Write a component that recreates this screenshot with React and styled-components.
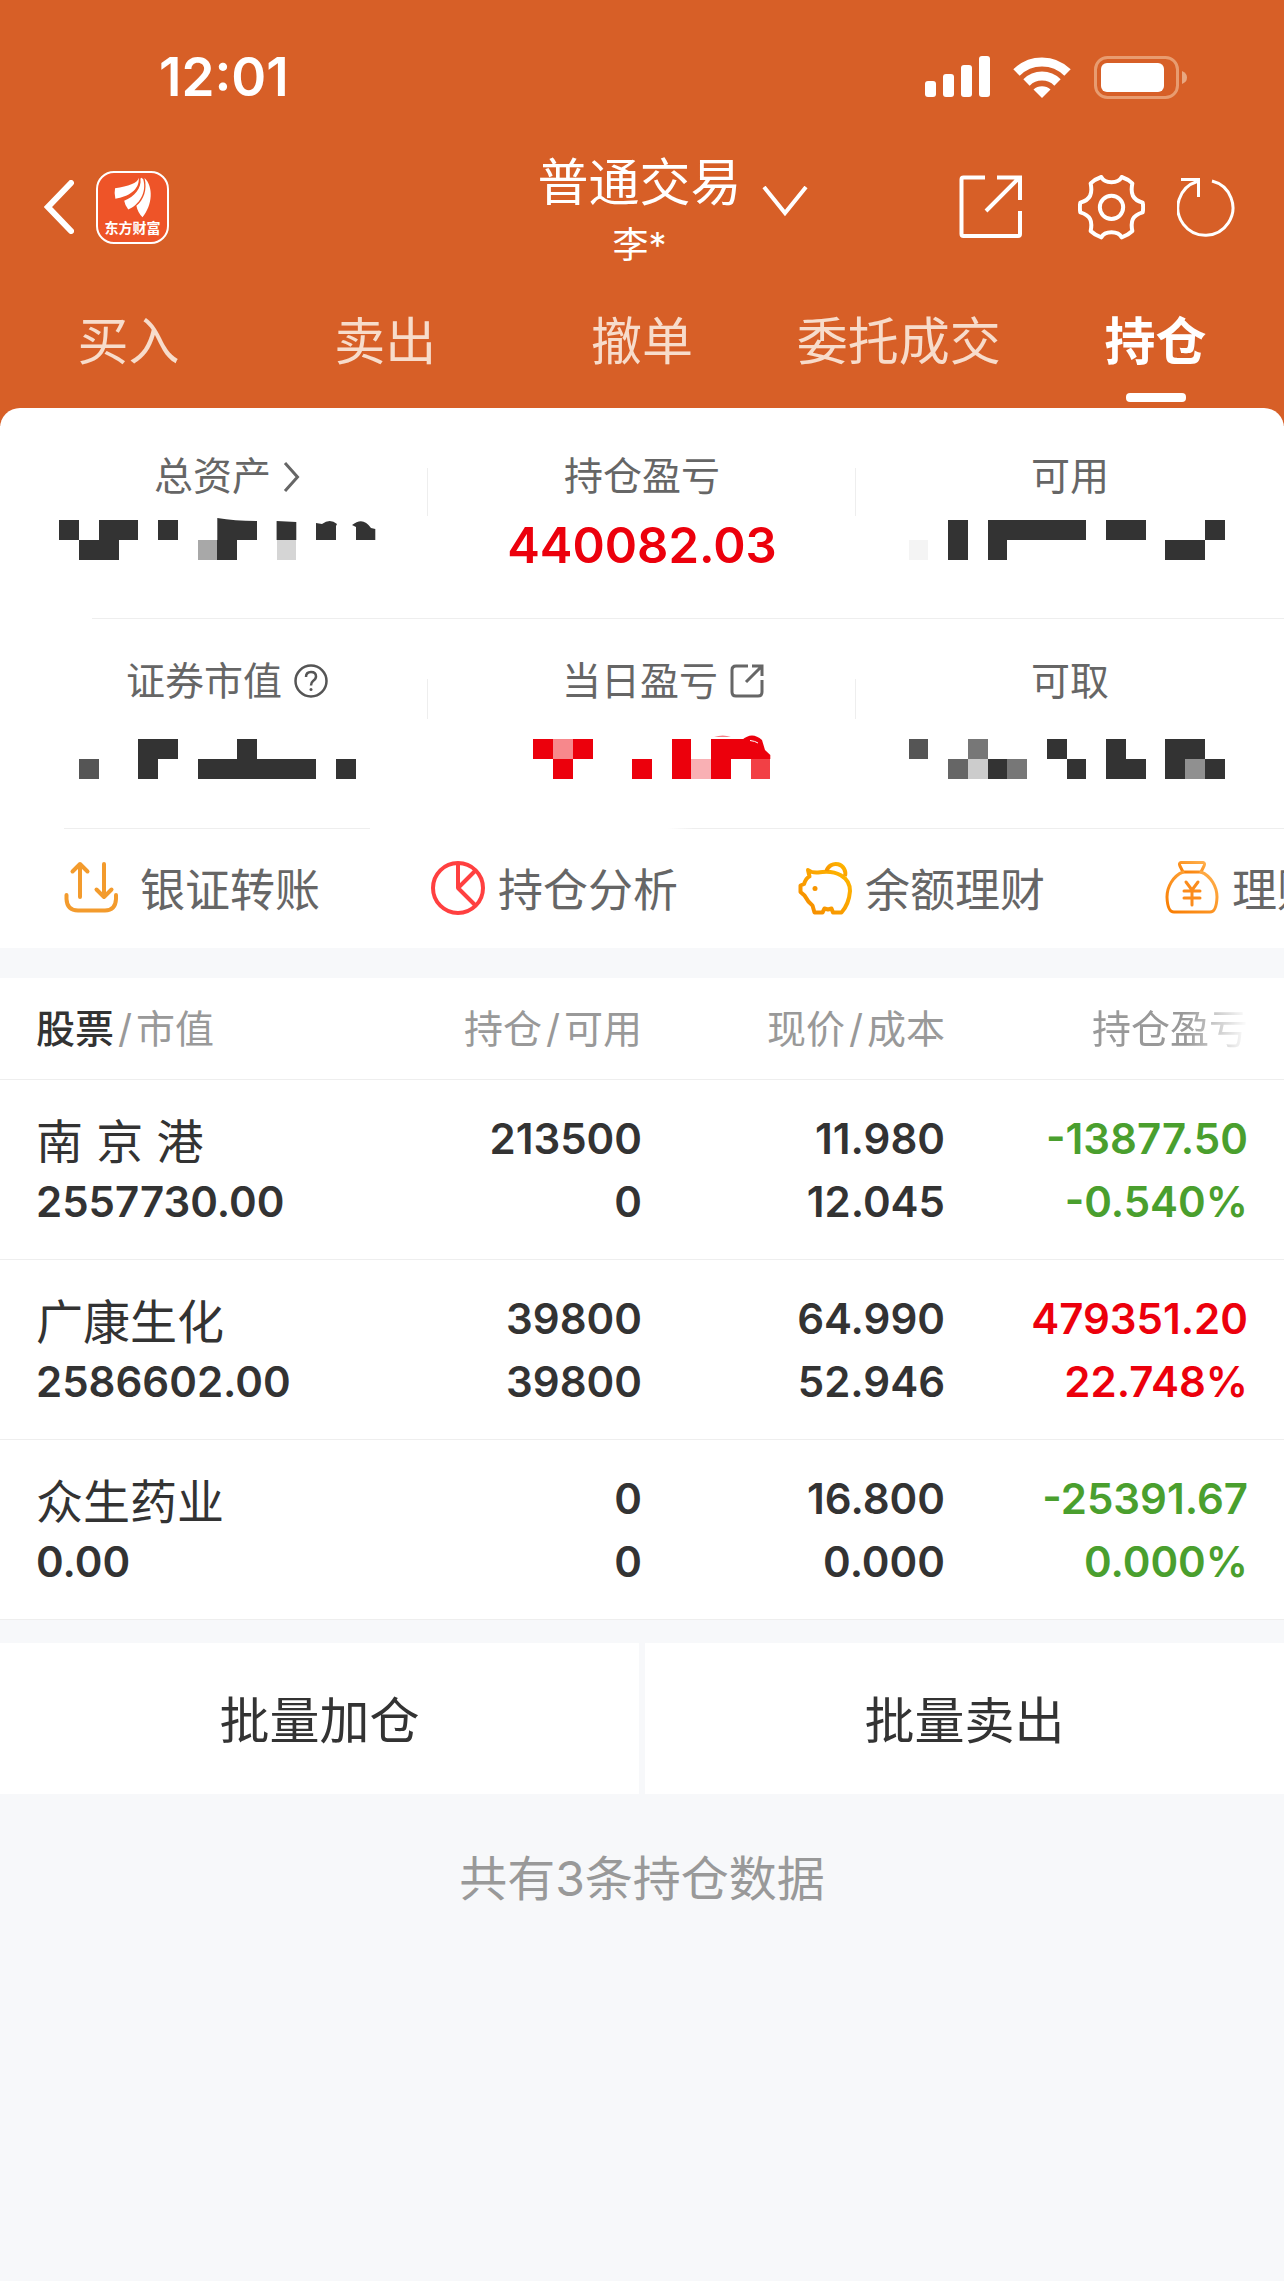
import styled, { createGlobalStyle } from 'styled-components'

const tabs = ['买入', '卖出', '撤单', '委托成交', '持仓']

const holdings = [
  {
    name: '南 京 港',
    value: '2557730.00',
    amount: '213500',
    available: '0',
    price: '11.980',
    cost: '12.045',
    profit: '-13877.50',
    rate: '-0.540%',
    trend: 'down',
  },
  {
    name: '广康生化',
    value: '2586602.00',
    amount: '39800',
    available: '39800',
    price: '64.990',
    cost: '52.946',
    profit: '479351.20',
    rate: '22.748%',
    trend: 'up',
  },
  {
    name: '众生药业',
    value: '0.00',
    amount: '0',
    available: '0',
    price: '16.800',
    cost: '0.000',
    profit: '-25391.67',
    rate: '0.000%',
    trend: 'down',
  },
]

// hidden amounts: [column, row, columns wide, rows high, colour]
const CELL = 1284 / 65
const DARK = '#333333'
const RED = '#ec000c'

const masks = {
  total: [
    [3, 0, 1, 1, DARK],
    [5, 0, 2, 1, DARK],
    [8, 0, 1, 1, DARK],
    [4, 1, 2, 1, DARK],
    [10, 1, 1, 1, '#a8a8a8'],
    [11, 1, 1, 1, DARK],
    [14, 1, 1, 1, '#d5d5d5'],
  ],
  usable: [
    [46, 1, 1, 1, '#f4f4f4'],
    [48, 0, 1, 2, DARK],
    [50, 0, 5, 1, DARK],
    [50, 1, 1, 1, DARK],
    [56, 0, 2, 1, DARK],
    [59, 1, 2, 1, DARK],
    [61, 0, 1, 1, DARK],
  ],
  market: [
    [4, 1, 1, 1, '#555555'],
    [7, 0, 2, 1, DARK],
    [7, 1, 1, 1, DARK],
    [12, 0, 1, 1, DARK],
    [10, 1, 6, 1, DARK],
    [17, 1, 1, 1, DARK],
  ],
  today: [
    [27, 0, 1, 1, RED],
    [28, 0, 1, 1, '#f7888c'],
    [29, 0, 1, 1, RED],
    [28, 1, 1, 1, RED],
    [32, 1, 1, 1, RED],
    [34, 0, 1, 2, RED],
    [35, 1, 1, 1, '#f9b0b4'],
    [36, 0, 2, 1, RED],
    [36, 1, 1, 1, RED],
    [38, 1, 1, 1, '#f24045'],
  ],
  cash: [
    [46, 0, 1, 1, '#555555'],
    [48, 1, 1, 1, '#666666'],
    [49, 0, 1, 1, '#777777'],
    [49, 1, 1, 1, '#cccccc'],
    [50, 1, 1, 1, DARK],
    [51, 1, 1, 1, '#777777'],
    [53, 0, 1, 1, DARK],
    [54, 1, 1, 1, DARK],
    [56, 0, 1, 2, DARK],
    [57, 1, 1, 1, DARK],
    [59, 0, 2, 1, DARK],
    [59, 1, 1, 1, DARK],
    [60, 1, 1, 1, '#909090'],
    [61, 1, 1, 1, DARK],
  ],
}

const Mask = ({ name, col, children }) => (
  <MaskSvg viewBox={`${col * 428} -6 428 46`} aria-hidden="true">
    <g shapeRendering="crispEdges">
      {masks[name].map(([x, y, w, h, fill]) => (
        <rect
          key={`${x}-${y}`}
          x={x * CELL}
          y={y * 20}
          width={w * CELL}
          height={h * 20}
          fill={fill}
        />
      ))}
    </g>
    {children}
  </MaskSvg>
)

const SignalIcon = () => (
  <svg width="65" height="42" viewBox="0 0 65 42" fill="#fff">
    <rect x="0" y="25" width="11" height="16" rx="3" />
    <rect x="18" y="18" width="11" height="23" rx="3" />
    <rect x="36" y="9" width="11" height="32" rx="3" />
    <rect x="54" y="0" width="11" height="41" rx="3" />
  </svg>
)

const WifiIcon = () => (
  <svg width="58" height="43" viewBox="0 0 58 43" fill="none">
    <path d="M3.500 16.500A36 36 0 0 1 54.500 16.500" stroke="#fff" strokeWidth="9" />
    <path d="M13.500 26.500A22 22 0 0 1 44.500 26.500" stroke="#fff" strokeWidth="9" />
    <path d="M29 42L20.500 33.500A13 13 0 0 1 37.500 33.500Z" fill="#fff" />
  </svg>
)

const BatteryIcon = () => (
  <svg width="94" height="43" viewBox="0 0 94 43" fill="none">
    <rect x="1.500" y="1.500" width="82" height="40" rx="12" stroke="#e89c70" strokeWidth="3" />
    <rect x="7" y="7" width="63" height="29" rx="6" fill="#fff" />
    <path d="M88 15Q93 17 93 21.500Q93 26 88 28Z" fill="#e8a781" />
  </svg>
)

const LogoMark = () => (
  <svg width="42" height="42" viewBox="332 467 124 124" fill="#fff">
    <path d="M411 469C408 485 380 494 341 500Q338 514 342 531C380 525 414 505 411 469Z" />
    <path d="M416 472C420 500 398 525 368 537Q370 550 380 563C412 550 436 512 424 473L418 469Z" />
    <path d="M428 470C437 505 425 535 404 552Q408 572 422 586C452 550 455 495 428 470Z" />
  </svg>
)

const OpenIcon = () => (
  <svg width="64" height="64" viewBox="0 0 64 64" fill="none" stroke="#fff" strokeWidth="4">
    <path d="M26 2.500H4.500Q2.500 2.500 2.500 4.500V59Q2.500 61 4.500 61H59Q61 61 61 59V36" />
    <path d="M38 2.500H61V25M60 3L27 36" />
  </svg>
)

const GearIcon = () => (
  <svg width="67" height="67" viewBox="594 431 201 201" fill="none" stroke="#fff" strokeWidth="12">
    <path
      strokeLinejoin="round"
      d="M664 440C674 461 715 461 725 440Q745 447 757 459C751 490 757 508 788 517Q791 531 788 546C757 555 751 572 757 602Q745 614 725 621C715 601 674 601 664 621Q644 614 632 602C638 572 632 555 601 546Q598 531 601 517C632 508 638 490 632 459Q644 447 664 440Z"
    />
    <circle cx="694.500" cy="531" r="35" />
  </svg>
)

const RefreshIcon = () => (
  <svg width="58" height="60" viewBox="0 0 58 60" fill="none" stroke="#fff" strokeWidth="3">
    <path d="M35 4A27.500 27.500 0 1 1 20 4.500" />
    <path d="M4 2.500H21.500V20" />
  </svg>
)

const TransferIcon = () => (
  <svg width="54" height="54" viewBox="0 0 54 54" fill="none" stroke="#f39b2d" strokeWidth="4" strokeLinecap="round" strokeLinejoin="round">
    <path d="M16 36V3M8.500 10.500L16 3L23.500 10.500" />
    <path d="M40 3V36M32.500 28.500L40 36L47.500 28.500" />
    <path d="M2.500 34V38Q3 49.500 14 49.500H41Q51.500 49.500 52 38V34" />
  </svg>
)

const PieIcon = () => (
  <svg width="54" height="54" viewBox="0 0 54 54" fill="none" stroke="#ff4040" strokeWidth="4">
    <circle cx="27" cy="27" r="25" />
    <path d="M27 2V27L44.500 9.500M27 27L44.500 44.500" strokeLinejoin="round" />
  </svg>
)

const PiggyIcon = () => (
  <svg width="54" height="55" viewBox="0 0 54 55" fill="none" stroke="url(#piggy)" strokeWidth="4" strokeLinejoin="round">
    <defs>
      <linearGradient id="piggy" x1="0" y1="1" x2="1" y2="0">
        <stop offset="0" stopColor="#f58a00" />
        <stop offset="1" stopColor="#ffb800" />
      </linearGradient>
    </defs>
    <path d="M10 10Q14 13 20 12.500C38 9 52 17 52 31Q51 44 43.500 52.500H35L33.500 48.500L30 49.500L26.500 48.500L24.500 52.500H16.500L14.500 45.500Q10 42 6.500 35.500L2.500 32V25.500L6 24Q8 18 11.500 16.500Z" />
    <path d="M28.500 11A9.500 9.500 0 1 1 47 16" />
    <ellipse cx="17" cy="28.500" rx="2.500" ry="2.500" fill="#f79500" stroke="none" />
  </svg>
)

const MoneyBagIcon = () => (
  <svg width="54" height="55" viewBox="0 0 54 55" fill="none" stroke="url(#bag)" strokeWidth="3" strokeLinejoin="round" strokeLinecap="round">
    <defs>
      <linearGradient id="bag" x1="0" y1="1" x2="1" y2="0">
        <stop offset="0" stopColor="#f97c00" />
        <stop offset="1" stopColor="#ffb04d" />
      </linearGradient>
    </defs>
    <path d="M16 2.500H38Q40.500 3 39 6L36 12H18L15 6Q13.500 3 16 2.500Z" />
    <path d="M18 12C8 16 2 27 2 37Q2.500 52 9 52H45Q51.500 52 52 37C52 27 46 16 36 12" />
    <path d="M21 22L27 30L33 22M27 30V45M19 31H35M19 38H35" stroke="#fb8c1c" />
  </svg>
)

const App = () => {
  return (
    <>
      <GlobalStyle />
      <Header>
        <StatusBar>
          <Time>12:01</Time>
          <StatusIcons>
            <SignalIcon />
            <WifiIcon />
            <BatteryIcon />
          </StatusIcons>
        </StatusBar>

        <NavBar>
          <NavSide>
            <IconButton aria-label="返回">
              <svg width="30" height="54" viewBox="0 0 30 54" fill="none" stroke="#fff" strokeWidth="6">
                <path d="M27 3L4 27L27 51" strokeLinecap="round" />
              </svg>
            </IconButton>
            <Logo href="#home">
              <LogoMark />
              <span>东方财富</span>
            </Logo>
          </NavSide>

          <AccountButton>
            <Account>
              普通交易
              <small>李*</small>
            </Account>
            <svg width="46" height="42" viewBox="0 0 46 42" fill="none" stroke="#fff" strokeWidth="4">
              <path d="M2 1L23 27L44 1" />
            </svg>
          </AccountButton>

          <NavActions>
            <IconButton aria-label="分享">
              <OpenIcon />
            </IconButton>
            <IconButton aria-label="设置" $before={55}>
              <GearIcon />
            </IconButton>
            <IconButton aria-label="刷新" $before={32}>
              <RefreshIcon />
            </IconButton>
          </NavActions>
        </NavBar>

        <Tabs>
          {tabs.map((tab) => (
            <Tab key={tab} href="#tab" $active={tab === '持仓'}>
              {tab}
            </Tab>
          ))}
        </Tabs>
      </Header>

      <Summary>
        <SummaryRow>
          <Stat>
            <StatLabel $lead={26}>
              总资产
              <svg width="17" height="34" viewBox="0 0 17 34" fill="none" stroke="#666" strokeWidth="3">
                <path d="M2 4L14.500 18L2 32" />
              </svg>
            </StatLabel>
            <Mask name="total" col={0}>
              <path d="M217.300 -2Q235 1 257 1V20H217.300Z" fill={DARK} />
              <path d="M276.600 1L296.300 2V20H276.600Z" fill={DARK} />
              <path d="M316 3L322 4Q330 -2 337 4L336 6V20H316Z" fill={DARK} />
              <path d="M352 5Q363 -4 371 8L375.300 9V20H356V7Z" fill={DARK} />
            </Mask>
          </Stat>
          <Stat>
            <StatLabel>持仓盈亏</StatLabel>
            <StatValue>440082.03</StatValue>
          </Stat>
          <Stat>
            <StatLabel>可用</StatLabel>
            <Mask name="usable" col={2} />
          </Stat>
        </SummaryRow>
        <Divider />

        <SummaryRow>
          <Stat $second>
            <StatLabel $lead={26}>
              证券市值
              <svg width="34" height="34" viewBox="0 0 34 34" fill="none" stroke="#555" strokeWidth="2.500">
                <circle cx="17" cy="17" r="15.500" />
                <path d="M12 13Q12 8 17 8Q22 8 22 12.500Q22 15 19 17Q17 18.500 17 21.500" />
                <circle cx="17" cy="25.500" r="1.500" fill="#555" stroke="none" />
              </svg>
            </StatLabel>
            <Mask name="market" col={0} />
          </Stat>
          <Stat $second>
            <StatLabel $lead={42}>
              当日盈亏
              <svg width="34" height="34" viewBox="0 0 34 34" fill="none" stroke="#666" strokeWidth="3">
                <path d="M18 2H6Q2 2 2 6V28Q2 32 6 32H28Q32 32 32 28V16" />
                <path d="M22 2H32V12M31 3L16 18" />
              </svg>
            </StatLabel>
            <Mask name="today" col={1}>
              <path d="M714 -2.500Q723 -4 731 -2.500Z" fill={RED} />
              <path d="M742 1Q752 -8 762 1L765 11L770.300 16V20H742Z" fill={RED} />
              <path d="M750 1.500Q755 2 758 4" stroke="#fff" fill="none" />
            </Mask>
          </Stat>
          <Stat $second>
            <StatLabel>可取</StatLabel>
            <Mask name="cash" col={2} />
          </Stat>
        </SummaryRow>
        <ToolDividers />

        <Tools>
          <Tool href="#transfer" $gap={22}>
            <TransferIcon />
            银证转账
          </Tool>
          <Tool href="#analysis">
            <PieIcon />
            持仓分析
          </Tool>
          <Tool href="#balance">
            <PiggyIcon />
            余额理财
          </Tool>
          <Tool href="#wealth">
            <MoneyBagIcon />
            理财
          </Tool>
        </Tools>
      </Summary>

      <Holdings>
        <thead>
          <tr>
            <th>
              <b>股票</b>
              <Slash>/</Slash>市值
            </th>
            <th>
              持仓<Slash>/</Slash>可用
            </th>
            <th>
              现价<Slash>/</Slash>成本
            </th>
            <th>
              <Fade>持仓盈亏</Fade>
            </th>
          </tr>
        </thead>
        <tbody>
          {holdings.map((item) => (
            <tr key={item.name}>
              <td>
                <Name>{item.name}</Name>
                <Figure>{item.value}</Figure>
              </td>
              <td>
                <Figure>{item.amount}</Figure>
                <Figure>{item.available}</Figure>
              </td>
              <td>
                <Figure>{item.price}</Figure>
                <Figure>{item.cost}</Figure>
              </td>
              <td>
                <Figure $trend={item.trend}>{item.profit}</Figure>
                <Figure $trend={item.trend}>{item.rate}</Figure>
              </td>
            </tr>
          ))}
        </tbody>
      </Holdings>

      <BatchActions>
        <BatchButton>批量加仓</BatchButton>
        <BatchButton>批量卖出</BatchButton>
      </BatchActions>

      <Footnote>共有3条持仓数据</Footnote>
    </>
  )
}
export default App

const GlobalStyle = createGlobalStyle`
  * {
    box-sizing: border-box;
  }

  body {
    margin: 0;
    background: #f7f8fa;
    color: #333;
    font-family: Inter, 'Noto Sans CJK SC', sans-serif;
    overflow-x: hidden;
  }

  button {
    border: none;
    padding: 0;
    background: transparent;
    color: inherit;
    font: inherit;
    cursor: pointer;
  }

  a {
    color: inherit;
    text-decoration: none;
  }

  svg {
    display: block;
    flex: none;
  }
`

const Header = styled.header`
  background: #d75f27;
  color: #fff;
  /* the white card's round corners sit on this colour */
  padding-bottom: 24px;
`

const StatusBar = styled.div`
  display: flex;
  justify-content: space-between;
  align-items: center;
  padding: 44px 96px 0 159px;
`

const Time = styled.span`
  font-size: 53px;
  line-height: 66px;
  font-weight: 600;
`

const StatusIcons = styled.div`
  display: flex;
  gap: 23px;
`

const NavBar = styled.nav`
  display: grid;
  grid-template-columns: 1fr auto 1fr;
  align-items: center;
  height: 124px;
  margin-top: 35px;
  padding: 0 49px 0 44px;
`

const NavSide = styled.div`
  display: flex;
  align-items: center;
  gap: 22px;
`

const NavActions = styled.div`
  display: flex;
  align-items: center;
  justify-content: flex-end;
`

const IconButton = styled.button`
  margin-left: ${({ $before = 0 }) => $before}px;
`

const Logo = styled.a`
  width: 73px;
  height: 73px;
  border: 2px solid #fff;
  border-radius: 18px;
  background: #ee5428;
  display: flex;
  flex-direction: column;
  align-items: center;
  padding-top: 4px;

  span {
    font-size: 14px;
    line-height: 18px;
    font-weight: 700;
  }
`

const AccountButton = styled.button`
  display: flex;
  align-items: center;
  gap: 20px;
  padding-left: 66px;
`

const Account = styled.span`
  display: flex;
  flex-direction: column;
  align-items: center;
  font-size: 51px;
  line-height: 76px;

  small {
    font-size: 36px;
    line-height: 48px;
  }
`

const Tabs = styled.div`
  display: grid;
  grid-template-columns: repeat(5, 1fr);
  margin-top: 35px;
`

const Tab = styled.a`
  display: flex;
  flex-direction: column;
  align-items: center;
  gap: 13px;
  font-size: 51px;
  line-height: 76px;
  font-weight: ${({ $active }) => ($active ? 700 : 400)};
  color: ${({ $active }) => ($active ? '#fff' : '#f7dccb')};

  &::after {
    content: '';
    width: 60px;
    height: 9px;
    border-radius: 4px;
    background: ${({ $active }) => ($active ? '#fff' : 'transparent')};
  }
`

const Summary = styled.section`
  margin-top: -18px;
  border-radius: 20px 20px 0 0;
  background: #fff;
  overflow: hidden;
`

const SummaryRow = styled.div`
  display: grid;
  grid-template-columns: repeat(3, 1fr);
`

const StatLabel = styled.div`
  display: flex;
  justify-content: center;
  align-items: center;
  gap: 12px;
  padding-left: ${({ $lead = 0 }) => $lead}px;
  font-size: 39px;
  line-height: 56px;
  color: #666;
`

const StatValue = styled.div`
  text-align: center;
  font-size: 49px;
  line-height: 56px;
  margin-top: 14px;
  font-weight: 600;
  color: ${RED};
`

const MaskSvg = styled.svg`
  width: 100%;
`

const Stat = styled.div`
  padding: ${({ $second }) => ($second ? '34px 0 49px' : '40px 0 44px')};
  background: linear-gradient(#eee, #eee) no-repeat right 60px / 1px
    ${({ $second }) => ($second ? 40 : 48)}px;

  &:last-child {
    background: none;
  }

  ${MaskSvg} {
    margin-top: ${({ $second }) => ($second ? 24 : 10)}px;
  }
`

const Divider = styled.div`
  height: 1px;
  margin-left: 92px;
  background: #eee;
`

const ToolDividers = styled.div`
  height: 1px;
  background: linear-gradient(
    to right,
    transparent 5%,
    #eee 5%,
    #eee 28.8%,
    transparent 28.8%,
    transparent 52%,
    #eee 54%
  );
`

const Tools = styled.div`
  display: flex;
  height: 119px;
  padding: 0 0 2px 64px;
`

const Tool = styled.a`
  flex: none;
  width: 367px;
  display: flex;
  align-items: center;
  gap: ${({ $gap = 13 }) => $gap}px;
  font-size: 45px;
  color: #666;
`

const Holdings = styled.table`
  display: block;
  margin-top: 30px;
  background: #fff;

  thead,
  tbody {
    display: block;
  }

  tr {
    display: grid;
    grid-template-columns: repeat(4, 1fr);
    padding: 0 36px;
    border-bottom: 1px solid #eee;
  }

  th,
  td {
    display: block;
    padding: 0;
    text-align: right;
  }

  th:first-child,
  td:first-child {
    text-align: left;
  }

  th {
    font-size: 39px;
    line-height: 101px;
    font-weight: 400;
    color: #999;
  }

  th b {
    font-weight: 500;
    color: #333;
  }

  td {
    padding: 27px 0 26px;
  }
`

const Slash = styled.span`
  margin: 0 4px;
`

const Fade = styled.span`
  mask-image: linear-gradient(to right, #000 60%, transparent 100%);
`

const Name = styled.div`
  font-size: 47px;
  line-height: 69px;
  margin-bottom: -6px;
`

const Figure = styled.div`
  font-size: 42px;
  line-height: 63px;
  font-weight: 600;
  color: ${({ $trend }) =>
    $trend === 'up' ? RED : $trend === 'down' ? '#4a9f2e' : '#333'};
`

const BatchActions = styled.div`
  display: grid;
  grid-template-columns: 1fr 1fr;
  gap: 6px;
  margin-top: 23px;
`

const BatchButton = styled.button`
  height: 151px;
  padding-bottom: 4px;
  background: #fff;
  font-size: 50px;
`

const Footnote = styled.p`
  margin: 50px 0;
  text-align: center;
  font-size: 48px;
  line-height: 70px;
  color: #999;
`
